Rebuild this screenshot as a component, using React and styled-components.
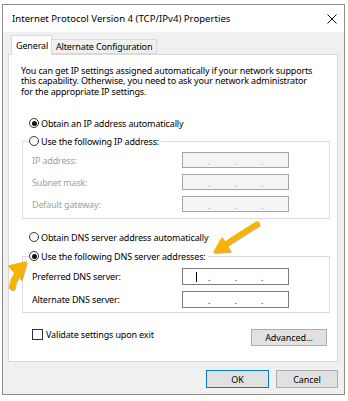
import React from 'react';
import styled, { createGlobalStyle, css } from 'styled-components';

const Global = createGlobalStyle`
  html, body { margin: 0; padding: 0; background: #fff; }
  * { box-sizing: border-box; }
`;

const FONT = `"Noto Sans", "Liberation Sans", sans-serif`;

const Page = styled.div`
  position: relative;
  width: 348px;
  height: 401px;
  padding: 4px 0 0 2px;
  font-family: ${FONT};
  color: #000;
`;

const Window = styled.div`
  width: 343px;
  height: 391px;
  border: 1px solid #8c8c8c;
  background: #f0f0f0;
  display: flex;
  flex-direction: column;
`;

const TitleBar = styled.div`
  height: 27px;
  background: #fff;
  display: flex;
  align-items: center;
  justify-content: space-between;
  padding: 0 7px 0 9px;
  font-size: 9.6px;
`;

const Body = styled.div`
  flex: 1;
  display: flex;
  flex-direction: column;
  padding: 4px 6px 0 5px;
  font-size: 9px;
  letter-spacing: -0.15px;
`;

const TabRow = styled.div`
  display: flex;
  align-items: flex-end;
  height: 19px;
  padding-left: 3px;
  position: relative;
  z-index: 1;
  margin-bottom: -1px;
`;

const Tab = styled.div`
  display: flex;
  align-items: center;
  border: 1px solid #d9d9d9;
  border-bottom: none;
  white-space: nowrap;
  ${p => p.$active ? css`
    height: 20px;
    width: 41px;
    background: #fff;
    padding-left: 4px;
  ` : css`
    height: 15px;
    padding: 0 4px 0 4px;
    background: #f0f0f0;
    border-left: none;
    border-bottom: 1px solid #d9d9d9;
    margin-bottom: 1px;
  `}
`;

const Panel = styled.div`
  height: 308px;
  border: 1px solid #d9d9d9;
  background: #fff;
  padding: 11px 7px 0 12px;
  display: flex;
  flex-direction: column;
`;

const Desc = styled.p`
  margin: 0;
  line-height: 10.4px;
  white-space: nowrap;
`;

const RadioRow = styled.label`
  display: flex;
  align-items: center;
  height: 12px;
  gap: 2px;
  white-space: nowrap;
  margin-left: ${p => p.$inset || 0}px;
  margin-top: ${p => p.$top || 0}px;
`;

const Radio = styled.span`
  width: 10px;
  height: 10px;
  flex: none;
  border-radius: 50%;
  border: 1px solid #333;
  background: #fff;
  display: flex;
  align-items: center;
  justify-content: center;
  &::after {
    content: '';
    width: 5px;
    height: 5px;
    border-radius: 50%;
    background: ${p => p.$checked ? '#111' : 'transparent'};
  }
`;

const Group = styled.div`
  margin: ${p => p.$top}px 0 0 1px;
  padding: 0 0 ${p => p.$bottom}px 9px;
  border: 1px solid #dcdcdc;
`;

const GroupHead = styled(RadioRow)`
  width: fit-content;
  margin: -7px 0 0 -3px;
  padding: 0 2px 0 0;
  background: #fff;
`;

const Fields = styled.div`
  display: grid;
  grid-template-columns: 150px 107px;
  row-gap: ${p => p.$gap}px;
  align-items: center;
  padding-top: ${p => p.$top}px;
`;

const FieldLabel = styled.span`
  color: ${p => p.$disabled ? '#a0a0a0' : '#000'};
`;

const IpBox = styled.div`
  height: ${p => p.$h}px;
  border: 1px solid ${p => p.$disabled ? '#a6a6a6' : '#7a7a7a'};
  background: ${p => p.$disabled ? '#f4f4f4' : '#fff'};
  display: flex;
  align-items: center;
  color: ${p => p.$disabled ? '#9a9a9a' : '#222'};
`;

const Seg = styled.span`
  width: 26px;
  height: 100%;
  display: flex;
  align-items: center;
`;

const Dot = styled.span`
  width: 1px;
  display: flex;
  justify-content: center;
  line-height: 1;
  padding-top: 2px;
`;

const Caret = styled.span`
  width: 1px;
  height: 10px;
  background: #000;
  margin-left: 13px;
`;

const BottomRow = styled.div`
  display: flex;
  justify-content: space-between;
  align-items: flex-start;
  margin-top: 15px;
  padding: 0 3px 0 11px;
`;

const CheckRow = styled.label`
  display: flex;
  align-items: center;
  gap: 3px;
  height: 12px;
`;

const Check = styled.span`
  width: 11px;
  height: 11px;
  border: 1px solid #333;
  background: #fff;
`;

const Button = styled.button`
  font-family: ${FONT};
  font-size: 9px;
  letter-spacing: -0.1px;
  color: #000;
  height: ${p => p.$h || 18}px;
  width: ${p => p.$w}px;
  margin-top: ${p => p.$top || 0}px;
  background: #e1e1e1;
  border: 1px solid ${p => p.$default ? '#0078d7' : '#adadad'};
  padding: 0;
`;

const Footer = styled.div`
  display: flex;
  justify-content: flex-end;
  gap: 7px;
  margin-top: 8px;
`;

const Overlay = styled.svg`
  position: absolute;
  left: 0;
  top: 0;
  pointer-events: none;
`;

function IpField({ disabled, h = 16, caret }) {
  return (
    <IpBox $disabled={disabled} $h={h}>
      <Seg>{caret && <Caret />}</Seg><Dot>.</Dot>
      <Seg /><Dot>.</Dot>
      <Seg /><Dot>.</Dot>
      <Seg />
    </IpBox>
  );
}

function Arrow({ shaft, head, w = 5 }) {
  return (
    <g>
      <g transform="translate(1,1.2)" fill="#9c7300" stroke="#9c7300" opacity="0.5">
        <path d={shaft} fill="none" strokeWidth={w} strokeLinecap="round" />
        <polygon points={head} strokeWidth="1.5" strokeLinejoin="round" />
      </g>
      <path d={shaft} fill="none" stroke="#f6b400" strokeWidth={w} strokeLinecap="round" />
      <polygon points={head} fill="#f6b400" stroke="#f6b400" strokeWidth="1.5" strokeLinejoin="round" />
    </g>
  );
}

export default function App() {
  return (
    <Page>
      <Global />
      <Window>
        <TitleBar>
          <span>Internet Protocol Version 4 (TCP/IPv4) Properties</span>
          <svg width="10" height="10" viewBox="0 0 10 10">
            <path d="M0.5 0.5 L9.5 9.5 M9.5 0.5 L0.5 9.5" stroke="#111" strokeWidth="1" />
          </svg>
        </TitleBar>
        <Body>
          <TabRow>
            <Tab $active>General</Tab>
            <Tab>Alternate Configuration</Tab>
          </TabRow>
          <Panel>
            <Desc>
              You can get IP settings assigned automatically if your network supports<br />
              this capability. Otherwise, you need to ask your network administrator<br />
              for the appropriate IP settings.
            </Desc>
            <RadioRow $inset={8} $top={20}>
              <Radio $checked />Obtain an IP address automatically
            </RadioRow>
            <Group $top={12} $bottom={6}>
              <GroupHead><Radio />Use the following IP address:</GroupHead>
              <Fields $gap={6} $top={5}>
                <FieldLabel $disabled>IP address:</FieldLabel>
                <IpField disabled />
                <FieldLabel $disabled>Subnet mask:</FieldLabel>
                <IpField disabled />
                <FieldLabel $disabled>Default gateway:</FieldLabel>
                <IpField disabled />
              </Fields>
            </Group>
            <RadioRow $inset={8} $top={12}>
              <Radio />Obtain DNS server address automatically
            </RadioRow>
            <Group $top={13} $bottom={4}>
              <GroupHead><Radio $checked />Use the following DNS server addresses:</GroupHead>
              <Fields $gap={6} $top={6}>
                <FieldLabel>Preferred DNS server:</FieldLabel>
                <IpField h={17} caret />
                <FieldLabel>Alternate DNS server:</FieldLabel>
                <IpField h={17} />
              </Fields>
            </Group>
            <BottomRow>
              <CheckRow><Check />Validate settings upon exit</CheckRow>
              <Button $w={76} $h={17} $top={1}>Advanced...</Button>
            </BottomRow>
          </Panel>
          <Footer>
            <Button $w={63} $default>OK</Button>
            <Button $w={62}>Cancel</Button>
          </Footer>
        </Body>
      </Window>
      <Overlay width="348" height="401" viewBox="0 0 348 401">
        <Arrow shaft="M257 224 Q244 232 227 243" head="214,252 230,251 222,238" />
        <Arrow shaft="M12 287 Q13 279 18 273" head="26,262 9,266 21,279" w={6} />
      </Overlay>
    </Page>
  );
}
